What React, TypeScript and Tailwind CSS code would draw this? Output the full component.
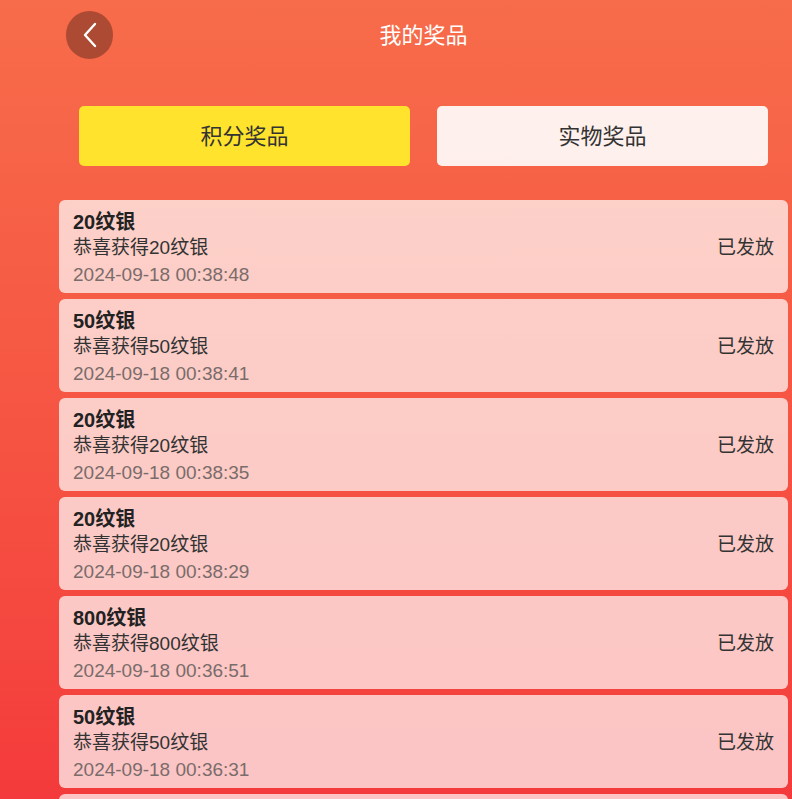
interface Prize {
  name: string
  time: string
}

const PRIZES: Prize[] = [
  { name: '20纹银', time: '2024-09-18 00:38:48' },
  { name: '50纹银', time: '2024-09-18 00:38:41' },
  { name: '20纹银', time: '2024-09-18 00:38:35' },
  { name: '20纹银', time: '2024-09-18 00:38:29' },
  { name: '800纹银', time: '2024-09-18 00:36:51' },
  { name: '50纹银', time: '2024-09-18 00:36:31' },
  { name: '20纹银', time: '2024-09-18 00:36:12' },
]

const FONT = { fontFamily: '"Liberation Sans", "Noto Sans CJK SC", sans-serif' }

export default function App() {
  return (
    <div
      className="h-[799px] overflow-hidden bg-gradient-to-b from-[#f76c4a] to-[#f43a3c]"
      style={FONT}
    >
      <div className="ml-[59px] w-[729px]">
        <header className="relative flex h-[70px] items-center justify-center">
          <button className="absolute left-[7px] top-[11px] flex h-[48px] w-[47px] items-center justify-center rounded-full bg-black/30 text-white">
            <BackIcon />
          </button>
          <h1 className="text-[22px] text-white">我的奖品</h1>
        </header>

        <div className="mt-[36px] flex gap-[27px] px-5">
          <button className="h-[60px] flex-1 rounded-[5px] bg-[#ffe32d] text-[22px] text-[#333]">积分奖品</button>
          <button className="h-[60px] flex-1 rounded-[5px] bg-white/90 text-[22px] text-[#333]">实物奖品</button>
        </div>

        <ul className="mt-[34px] flex flex-col gap-[6px]">
          {PRIZES.map((p, i) => (
            <li
              key={i}
              className="flex h-[93px] items-center justify-between rounded-[6px] bg-white/70 pl-[14px] pr-[14px] pt-[4px]"
            >
              <div className="flex flex-col leading-[26.5px]">
                <span className="text-[20px] font-bold text-[#222]">{p.name}</span>
                <span className="text-[19px] text-[#333]">恭喜获得{p.name}</span>
                <span className="text-[19px] text-[#7a6c6a]">{p.time}</span>
              </div>
              <span className="text-[19px] text-[#333]">已发放</span>
            </li>
          ))}
        </ul>
      </div>
    </div>
  )
}

function BackIcon() {
  return (
    <svg width="16" height="26" viewBox="0 0 16 26" fill="none" stroke="currentColor" strokeWidth="2.4" strokeLinecap="round" strokeLinejoin="round" aria-hidden>
      <path d="M13 2 L3 13 L13 24" />
    </svg>
  )
}
